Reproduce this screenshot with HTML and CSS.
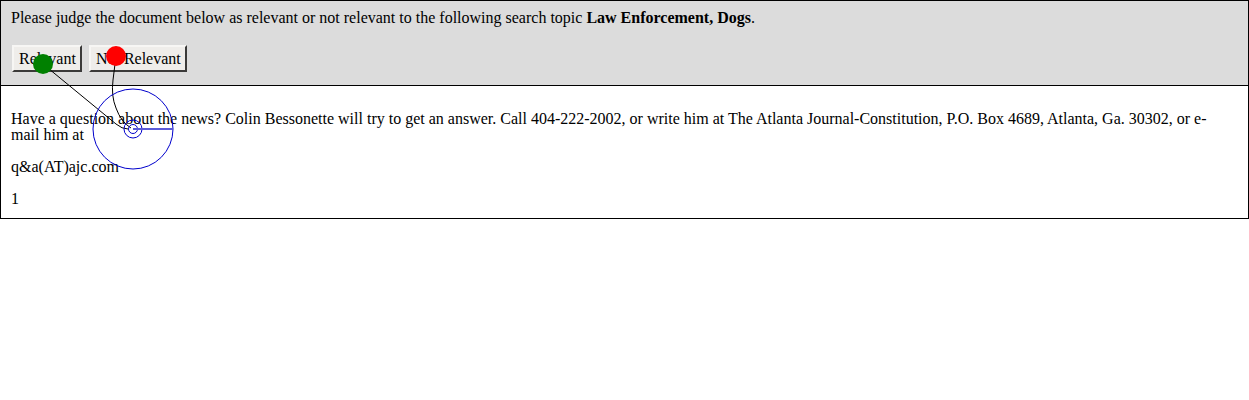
FILE: index.html
```html
<!DOCTYPE html>
<html>
<head>
<meta charset="utf-8">
<link rel="stylesheet" href="styles.css">
</head>
<body>
<div class="frame">
  <div class="header">
    <p class="prompt">Please judge the document below as relevant or not relevant to the following search topic <b>Law Enforcement, Dogs</b>.</p>
    <div class="buttons">
      <button class="btn">Relevant</button>
      <button class="btn">Not Relevant</button>
    </div>
  </div>
  <div class="doc">
    <p>Have a question about the news? Colin Bessonette will try to get an answer. Call 404-222-2002, or write him at The Atlanta Journal-Constitution, P.O. Box 4689, Atlanta, Ga. 30302, or e-mail him at</p>
    <p>q&amp;a(AT)ajc.com</p>
    <p>1</p>
  </div>
</div>
<svg class="overlay" width="1249" height="400" viewBox="0 0 1249 400">
  <path d="M43 64 L116 124 Q122 129 128 129" fill="none" stroke="#000" stroke-width="1"/>
  <path d="M116 56 L113 80 Q111 96 116 108 Q121 122 131 128" fill="none" stroke="#000" stroke-width="1"/>
  <circle cx="133" cy="129" r="40" fill="none" stroke="#0000cc" stroke-width="1"/>
  <circle cx="133" cy="129" r="9" fill="none" stroke="#0000cc" stroke-width="1"/>
  <circle cx="133" cy="129" r="4.5" fill="none" stroke="#0000cc" stroke-width="1"/>
  <line x1="133" y1="129" x2="173" y2="129" stroke="#5a5ad8" stroke-width="2"/>
  <circle cx="43" cy="64" r="10" fill="#008000"/>
  <circle cx="116" cy="56" r="10" fill="#ff0000"/>
</svg>
</body>
</html>
```
FILE: styles.css
```css
html, body {
  margin: 0;
  padding: 0;
  background: #fff;
}
body {
  font-family: "Liberation Serif", "Times New Roman", serif;
  font-size: 16px;
  color: #000;
  position: relative;
}
.frame {
  border: 1px solid #000;
  width: 1247px;
}
.header {
  background: #dcdcdc;
  border-bottom: 1px solid #000;
  padding: 7px 10px 13px 10px;
}
.prompt {
  margin: 0 0 18px 0;
  line-height: 19px;
}
.buttons {
  display: flex;
  gap: 7px;
  padding-left: 1px;
}
.btn {
  font-family: "Liberation Serif", "Times New Roman", serif;
  font-size: 16px;
  color: #000;
  background: #efedea;
  border: 2px outset #c8c6c2;
  border-color: #f7f6f4 #8f8d8a #8f8d8a #f7f6f4;
  height: 27px;
  padding: 0 4px 0 5px;
  margin: 0;
  line-height: 21px;
}
.doc {
  padding: 25px 20px 11px 10px;
}
.doc p {
  margin: 0 0 16px 0;
  line-height: 16px;
}
.doc p:last-child {
  margin-bottom: 0;
}
.overlay {
  position: absolute;
  left: 0;
  top: 0;
  pointer-events: none;
}
```
